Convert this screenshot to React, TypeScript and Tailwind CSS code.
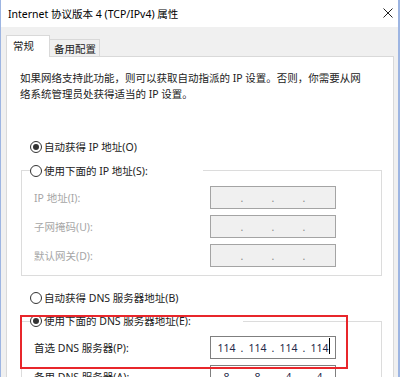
const font = { fontFamily: '"Noto Sans", "Noto Sans CJK SC", sans-serif' };

function Radio({ checked, disabled }: { checked?: boolean; disabled?: boolean }) {
  return (
    <span
      className={`flex h-[12px] w-[12px] shrink-0 items-center justify-center rounded-full border bg-white ${
        disabled ? "border-[#b5b5b5]" : "border-[#333]"
      }`}
    >
      {checked && <span className="h-[6px] w-[6px] rounded-full bg-[#333]" />}
    </span>
  );
}

function RadioRow({ label, checked }: { label: string; checked?: boolean }) {
  return (
    <div className="flex h-[16px] items-center gap-[2px] text-[#222]">
      <Radio checked={checked} />
      <span>{label}</span>
    </div>
  );
}

function IpBox({
  values,
  disabled,
  cursor,
}: {
  values: string[];
  disabled?: boolean;
  cursor?: boolean;
}) {
  return (
    <div
      className={`flex h-[23px] w-[126px] items-center border pl-[3px] ${
        disabled
          ? "border-[#a4a4a4] bg-[#f0f0f0] text-[#8a8a8a]"
          : "border-[#7f7f7f] bg-white text-[#1f2a48]"
      }`}
    >
      {values.map((v, i) => (
        <div key={i} className="flex items-center">
          {i > 0 && <span className="w-[6px] text-center">.</span>}
          <span className="relative w-[25px] text-center">
            {v}
            {cursor && i === 3 && (
              <span className="absolute right-[2px] top-[-2px] h-[16px] w-px bg-black" />
            )}
          </span>
        </div>
      ))}
    </div>
  );
}

function FieldRow({
  label,
  values,
  disabled,
  cursor,
}: {
  label: string;
  values: string[];
  disabled?: boolean;
  cursor?: boolean;
}) {
  return (
    <div className="flex items-center">
      <span className={`w-[176px] ${disabled ? "text-[#a6a6a6]" : "text-[#222]"}`}>{label}</span>
      <IpBox values={values} disabled={disabled} cursor={cursor} />
    </div>
  );
}

function GroupBox({
  legend,
  legendWidth,
  checked,
  legendOffset,
  children,
}: {
  legend: string;
  legendWidth: string;
  checked?: boolean;
  legendOffset: string;
  children: React.ReactNode;
}) {
  return (
    <div className="ml-[1px] w-[361px] border border-[#dcdcdc] pb-[8px]">
      <div className={`${legendOffset} ml-[8px] ${legendWidth} bg-white`}>
        <RadioRow label={legend} checked={checked} />
      </div>
      <div className="mt-[7px] flex flex-col gap-[6px] pl-[12px]">{children}</div>
    </div>
  );
}

export default function App() {
  const blank = ["", "", "", ""];
  return (
    <div
      className="relative flex h-[377px] w-[400px] flex-col overflow-hidden border-l border-r-2 border-[#9db5e2] bg-[#f0f0f0] text-[10.5px] leading-[16px]"
      style={font}
    >
      {/* title bar */}
      <div className="flex h-[27px] shrink-0 items-center justify-between bg-white pl-[7px] pr-[5px] text-black">
        <span>Internet 协议版本 4 (TCP/IPv4) 属性</span>
        <svg width="10" height="10" viewBox="0 0 10 10" className="mb-[1px]">
          <path d="M0.5 0.5 L9.5 9.5 M9.5 0.5 L0.5 9.5" stroke="#222" strokeWidth="1" />
        </svg>
      </div>

      <div className="flex flex-1 flex-col pl-[5px] pr-[4px] pt-[8px]">
        {/* tabs */}
        <div className="flex h-[21px] items-end">
          <div className="relative z-10 mb-[-1px] h-[22px] w-[44px] border-l border-r border-t border-[#d9d9d9] bg-white pl-[6px] pt-[2px] text-[#222]">
            常规
          </div>
          <div className="h-[17px] w-[50px] border-r border-t border-[#d9d9d9] bg-[#f0f0f0] pl-[4px] pt-[1px] text-[#222]">
            备用配置
          </div>
        </div>

        {/* panel */}
        <div className="relative flex-1 border border-[#d9d9d9] bg-white pl-[13px] pt-[13px]">
          <p className="whitespace-nowrap text-[#222]">
            如果网络支持此功能，则可以获取自动指派的 IP 设置。否则，你需要从网
            <br />
            络系统管理员处获得适当的 IP 设置。
          </p>

          <div className="ml-[10px] mt-[37px]">
            <RadioRow label="自动获得 IP 地址(O)" checked />
          </div>

          <div className="mt-[15px]">
            <GroupBox legend="使用下面的 IP 地址(S):" legendWidth="w-[173px]" legendOffset="-mt-[8px]">
              <FieldRow label="IP 地址(I):" values={blank} disabled />
              <FieldRow label="子网掩码(U):" values={blank} disabled />
              <FieldRow label="默认网关(D):" values={blank} disabled />
            </GroupBox>
          </div>

          <div className="ml-[10px] mt-[14px]">
            <RadioRow label="自动获得 DNS 服务器地址(B)" />
          </div>

          <div className="mt-[15px]">
            <GroupBox
              legend="使用下面的 DNS 服务器地址(E):"
              legendWidth="w-[213px]"
              legendOffset="-mt-[9px]"
              checked
            >
              <FieldRow label="首选 DNS 服务器(P):" values={["114", "114", "114", "114"]} cursor />
              <FieldRow label="备用 DNS 服务器(A):" values={["8", "8", "4", "4"]} />
            </GroupBox>
          </div>

          {/* red highlight annotation */}
          <div className="pointer-events-none absolute left-[13px] top-[258px] h-[54px] w-[328px] border-2 border-[#e8262b]" />
        </div>
      </div>
    </div>
  );
}
